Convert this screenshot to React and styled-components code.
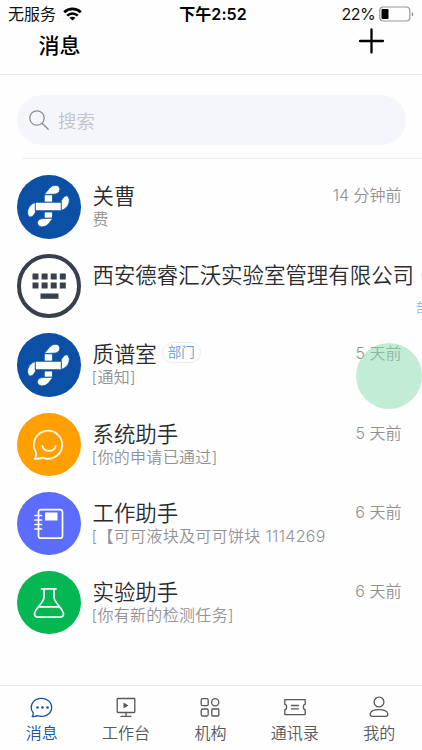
import React from 'react';
import styled, { createGlobalStyle } from 'styled-components';

const Global = createGlobalStyle`
  * { box-sizing: border-box; }
  body { margin: 0; background: #fefefe; overflow: hidden; }
`;

const Screen = styled.div`
  position: relative;
  display: flex;
  flex-direction: column;
  width: 422px;
  height: 750px;
  overflow: hidden;
  background: #fefefe;
  font-family: Inter, "Noto Sans CJK SC", sans-serif;
  color: #2b2b2f;
  text-spacing-trim: space-all;
`;

const StatusBar = styled.div`
  display: grid;
  grid-template-columns: 1fr auto 1fr;
  align-items: center;
  height: 28px;
  padding: 0 8px;
  font-size: 16px;
  line-height: 28px;
  color: #111;
`;
const Carrier = styled.div`
  display: flex;
  align-items: center;
  gap: 7px;
`;
const Clock = styled.div`
  font-weight: 600;
  color: #000;
  letter-spacing: 0.1px;
  padding-left: 4px;
`;
const Power = styled.div`
  display: flex;
  align-items: center;
  justify-content: flex-end;
  gap: 4px;
  letter-spacing: -0.6px;
`;

const Header = styled.header`
  display: flex;
  justify-content: space-between;
  height: 47px;
  padding: 0 37px 0 38.5px;
  border-bottom: 1px solid #ebebed;
`;
const Title = styled.h1`
  margin: 3px 0 0;
  font-size: 21px;
  line-height: 30px;
  font-weight: 500;
  color: #000;
`;

const SearchArea = styled.div`
  height: 84px;
  padding: 20px 16px 0 17px;
`;
const SearchBox = styled.div`
  display: flex;
  align-items: center;
  gap: 9px;
  height: 50px;
  padding-left: 12px;
  border-radius: 25px;
  background: #f5f6fb;
  color: #c2c2c6;
  font-size: 18.4px;
  font-weight: 350;
`;
const Divider = styled.div`
  height: 1px;
  flex: none;
  margin: -1px 0 8px 22px;
  background: #efeff1;
`;

const List = styled.div`
  flex: 1;
  min-height: 0;
`;
const Row = styled.div`
  display: flex;
  height: 79.2px;
  padding: 8px 20.5px 0 17px;
`;
const Avatar = styled.div`
  flex: none;
  display: flex;
  align-items: center;
  justify-content: center;
  width: 63.5px;
  height: 63.5px;
  border-radius: 50%;
  background: ${(p) => p.$color};
  border: ${(p) => (p.$ring ? `4.5px solid ${p.$ring}` : 'none')};
`;
const Body = styled.div`
  flex: 1;
  min-width: 0;
  margin-left: 11px;
`;
const NameLine = styled.div`
  display: flex;
  align-items: center;
  gap: 5px;
  height: 30px;
  margin-top: 6px;
  padding-left: 1px;
`;
const Name = styled.div`
  font-size: 21.45px;
  font-weight: 350;
  line-height: 30px;
  white-space: nowrap;
`;
const Preview = styled.div`
  padding-left: ${(p) => (p.$indent ? 1 : 0)}px;
  font-size: 16px;
  font-weight: 350;
  letter-spacing: 0.32px;
  line-height: 17.5px;
  color: #929296;
  white-space: nowrap;
`;
const Time = styled.div`
  flex: none;
  height: 30px;
  margin-top: 5px;
  font-size: 16px;
  font-weight: 350;
  line-height: 30px;
  color: #909094;
`;
const Badge = styled.span`
  flex: none;
  height: 21px;
  padding: 0 5px;
  margin-top: -4px;
  border: 1px solid #e8eff6;
  border-radius: 11px;
  font-size: 13.5px;
  font-weight: 350;
  line-height: 19px;
  color: #5c9cda;
`;
const OverflowBadge = styled.span`
  position: absolute;
  left: 416px;
  top: 297px;
  border-top: 1px solid #f0f4f8;
  font-size: 13px;
  line-height: 18px;
  color: #8fbde8;
`;
const OverflowPill = styled.span`
  position: absolute;
  left: 420.5px;
  top: 268px;
  width: 24px;
  height: 14px;
  border: 1px solid #e6e6ea;
  border-radius: 7px;
`;

const TouchDot = styled.div`
  position: absolute;
  left: 356px;
  top: 342.500px;
  width: 66px;
  height: 66px;
  border-radius: 50%;
  background: rgba(140, 220, 176, 0.53);
`;

const TabBar = styled.nav`
  flex: none;
  display: grid;
  grid-template-columns: repeat(5, 84.4px);
  height: 65px;
  margin-left: -0.5px;
  border-top: 1px solid #ececee;
`;
const Tab = styled.div`
  display: flex;
  flex-direction: column;
  align-items: center;
  padding-top: 8.5px;
  font-size: 16px;
  font-weight: 350;
  line-height: 24px;
  color: ${(p) => (p.$active ? '#1553a6' : '#58585c')};
`;
const TabIcon = styled.svg`
  display: block;
  width: 24px;
  height: 24px;
  margin-bottom: 2px;
  fill: none;
  stroke: currentColor;
  stroke-width: 1.3;
  stroke-linejoin: round;
  stroke-linecap: round;
`;
const Glyph = styled.svg`
  display: block;
  flex: none;
  fill: none;
  stroke-linejoin: round;
  stroke-linecap: round;
`;

const Wifi = () => (
  <Glyph width="19" height="14" viewBox="0 0 19 14" stroke="#000" strokeWidth="2.6">
    <path strokeLinecap="butt" d="M1.2 5.2c4.7-4.5 11.9-4.5 16.6 0M4.2 8.6c3-2.9 7.6-2.9 10.6 0" />
    <path d="M9.5 13.6 6.5 10.8c1.7-1.4 4.3-1.4 6 0z" fill="#000" stroke="none" />
  </Glyph>
);
const Battery = () => (
  <Glyph width="35" height="16" viewBox="0 0 35 16">
    <rect x="0.8" y="1" width="30" height="14" rx="3.5" stroke="#98989a" strokeWidth="1.2" />
    <rect x="2.5" y="3" width="7" height="10" rx="1" fill="#000" />
    <path d="M32.8 6v4.5q1.4-.6 1.4-2.2T32.8 6z" fill="#88888a" />
  </Glyph>
);
const Plus = () => (
  <Glyph width="26" height="26" viewBox="0 0 26 26" stroke="#000" strokeWidth="2.3">
    <path d="M12.5 1.5v23M1 13h23" />
  </Glyph>
);
const Search = () => (
  <Glyph width="20" height="20" viewBox="0 0 20 20" stroke="#8e8e92" strokeWidth="1.3">
    <circle cx="8" cy="8" r="7.2" />
    <path d="m13.2 13.2 6 6" />
  </Glyph>
);

const Logo = () => (
  <Glyph width="63" height="63" viewBox="0 0 63 63" stroke="#0c50a5" strokeWidth="0.8">
    <g fill="#fff">
      <path d="M27.5 19.2 33 12.6Q35.5 10.2 39 10.3Q43 11.2 42.8 14.8Q42 19.2 37 19.2z" />
      <path d="M27.5 19.8h8v7.4h-8z" />
      <path d="M27.5 37h8v6.2h-8z" />
      <path d="M35.7 43.5 31 49.6Q28.5 52 24.5 51.9Q20.3 51 20.4 47.6Q21.3 43.5 26 43.5z" />
      <path d="M18.6 27.3v9.9L16 41Q13.5 43 11.5 41.3Q10 38.5 10.8 35Q12.5 29.5 18.6 27.3z" />
      <path d="M44.2 35.6v-9.900L46.8 21.900Q49.300 19.900 51.300 21.600Q52.800 24.500 52 28Q50.300 33.500 44.200 35.600z" />
      <path d="M18.6 27.3H44.2v8.4H18.6z" />
    </g>
  </Glyph>
);
const Keyboard = () => (
  <Glyph width="36" height="28" viewBox="0 0 36 28">
    <g fill="#38414b">
      {[1.5, 10.6, 19.7, 28.8].map((x) => (
        <React.Fragment key={x}>
          <rect x={x} y="1.5" width="6" height="6" />
          <rect x={x} y="10.5" width="6" height="6" />
        </React.Fragment>
      ))}
      <rect x="9.5" y="21.5" width="18" height="5.3" />
    </g>
  </Glyph>
);
const Chat = () => (
  <Glyph width="63" height="63" viewBox="0 0 63 63" stroke="#fffaf0" strokeWidth="1.8">
    <path d="M17.8 45.8Q20 42.5 18.9 39A14.2 14 0 1 1 25.5 44.6Q22.5 46 17.8 45.8z" />
    <path d="M25.3 33a7 7 0 0 0 13.4 0" />
  </Glyph>
);
const Notebook = () => (
  <Glyph width="63" height="63" viewBox="0 0 63 63" stroke="#fff" strokeWidth="1.7">
    <rect x="21.5" y="17.7" width="24" height="28.5" rx="2.5" />
    <path d="M18 23.5h6.5M18 28h6.5M18 32.5h6.5M18 37h6.5" />
    <rect x="28" y="20.5" width="12.5" height="8" fill="#fff" stroke="none" />
  </Glyph>
);
const Flask = () => (
  <Glyph width="63" height="63" viewBox="0 0 63 63" stroke="#fff" strokeWidth="1.7">
    <path d="M24.5 17.8h14.5M27 18v8.5c0 5-9.5 11.5-9.5 16.5q0 3.200 4 3.200h21q4 0 4-3.200c0-5-9.500-11.500-9.500-16.500V18M22 35.800h19.500" />
  </Glyph>
);

const rows = [
  { name: '关曹', preview: '费', time: '14 分钟前', color: '#0c50a5', icon: <Logo /> },
  { name: '西安德睿汇沃实验室管理有限公司', color: '#fff', ring: '#38414b', icon: <Keyboard /> },
  { name: '质谱室', badge: '部门', preview: '[通知]', time: '5 天前', color: '#0c50a5', icon: <Logo /> },
  { name: '系统助手', preview: '[你的申请已通过]', time: '5 天前', color: '#ffa000', icon: <Chat /> },
  { name: '工作助手', preview: '[【可可液块及可可饼块 1114269', time: '6 天前', color: '#5c6cfc', icon: <Notebook /> },
  { name: '实验助手', preview: '[你有新的检测任务]', time: '6 天前', color: '#04b753', icon: <Flask /> },
];

const tabs = [
  {
    label: '消息',
    icon: (
      <>
        <path d="M2.2 21.5Q3.8 20 2.9 17.3A10.2 9 0 1 1 7.5 20.7Q5 21.8 2.2 21.5z" />
        <g fill="currentColor" stroke="none">
          <circle cx="7.5" cy="12.5" r="1.3" />
          <circle cx="12.5" cy="12.5" r="1.3" />
          <circle cx="17.5" cy="12.5" r="1.3" />
        </g>
      </>
    ),
  },
  {
    label: '工作台',
    icon: (
      <>
        <rect x="3.2" y="3.5" width="17.6" height="14" rx="0.8" />
        <path d="M12 17.5v3.8M7 21.3h10" />
        <path d="M9.5 7.5v6l5-3z" fill="currentColor" stroke="none" />
      </>
    ),
  },
  {
    label: '机构',
    icon: (
      <>
        <rect x="3.2" y="3.7" width="7" height="7" rx="1.5" />
        <circle cx="17.2" cy="7.2" r="3.6" />
        <rect x="3.2" y="14" width="7" height="7" rx="1.5" />
        <rect x="13.8" y="14" width="7" height="7" rx="0.8" />
      </>
    ),
  },
  {
    label: '通讯录',
    icon: (
      <path d="M1.8 4.7h20.4v4.6q-1.8 0-1.8 2.7t1.8 2.7v4.9H1.8v-4.9q1.8 0 1.8-2.7t-1.8-2.7zM8.5 10.5h7M8.5 13.8h7" />
    ),
  },
  {
    label: '我的',
    icon: (
      <>
        <circle cx="12" cy="7" r="4.9" />
        <path d="M5.5 21.3q-2.5 0-2.3-2.3c.4-3 4.3-4.3 8.8-4.3s8.4 1.3 8.8 4.3q.2 2.3-2.3 2.3z" />
      </>
    ),
  },
];

export default function App() {
  return (
    <Screen>
      <Global />
      <StatusBar>
        <Carrier>无服务<Wifi /></Carrier>
        <Clock>下午2:52</Clock>
        <Power>22%<Battery /></Power>
      </StatusBar>
      <Header>
        <Title>消息</Title>
        <Plus />
      </Header>
      <SearchArea>
        <SearchBox><Search />搜索</SearchBox>
      </SearchArea>
      <Divider />
      <List>
        {rows.map((r) => (
          <Row key={r.name}>
            <Avatar $color={r.color} $ring={r.ring}>{r.icon}</Avatar>
            <Body>
              <NameLine>
                <Name>{r.name}</Name>
                {r.badge && <Badge>{r.badge}</Badge>}
              </NameLine>
              <Preview $indent={r.preview === '费'}>{r.preview}</Preview>
            </Body>
            {r.time && <Time>{r.time}</Time>}
          </Row>
        ))}
      </List>
      <OverflowPill />
      <OverflowBadge>部</OverflowBadge>
      <TouchDot />
      <TabBar>
        {tabs.map((t, i) => (
          <Tab key={t.label} $active={i === 0}>
            <TabIcon viewBox="0 0 24 24">{t.icon}</TabIcon>
            {t.label}
          </Tab>
        ))}
      </TabBar>
    </Screen>
  );
}
